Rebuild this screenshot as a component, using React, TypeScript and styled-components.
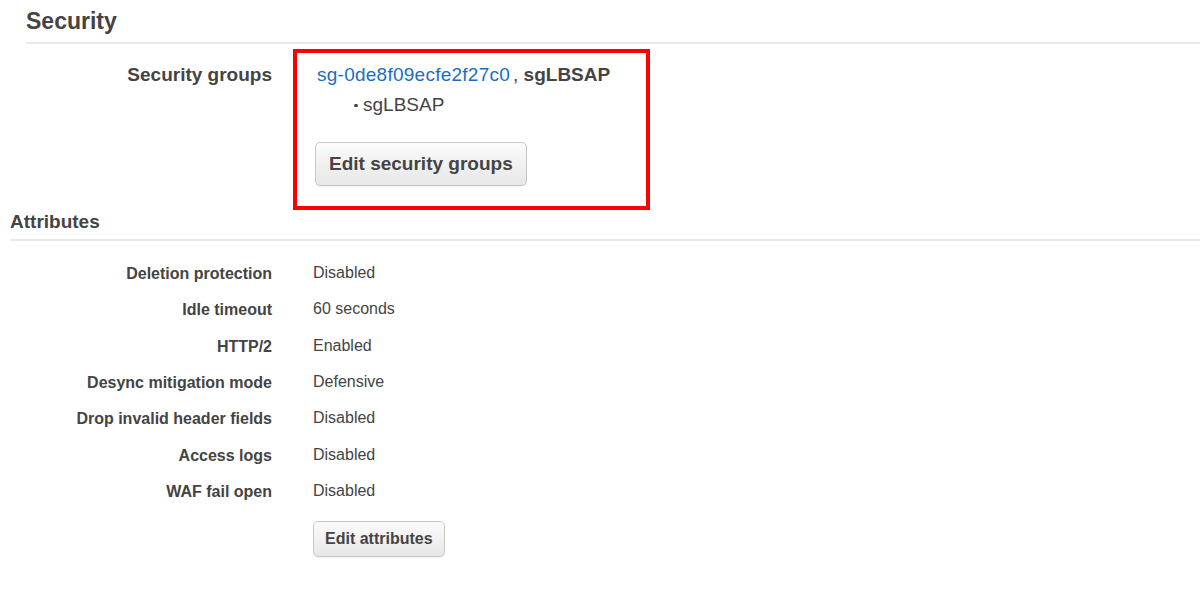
import React from "react";
import styled, { createGlobalStyle } from "styled-components";

const GlobalStyle = createGlobalStyle`
  html, body {
    margin: 0;
    padding: 0;
    background: #ffffff;
  }
  body {
    font-family: "Liberation Sans", Arial, Helvetica, sans-serif;
    color: #444444;
    overflow: hidden;
  }
`;

const Page = styled.div`
  width: 1200px;
  height: 593px;
  background: #ffffff;
`;

const SectionHeader = styled.h2<{ $indent: number; $size: number; $lh: number; $pt: number; $pb: number }>`
  margin: 0 0 0 ${(p) => p.$indent}px;
  padding: ${(p) => p.$pt}px 0 ${(p) => p.$pb}px;
  font-size: ${(p) => p.$size}px;
  line-height: ${(p) => p.$lh}px;
  font-weight: 700;
  color: #444444;
  border-bottom: 2px solid #e8e8e8;
`;

const DetailRow = styled.div<{ $gap: number; $mt?: number }>`
  display: grid;
  grid-template-columns: 272px 1fr;
  column-gap: ${(p) => p.$gap}px;
  align-items: start;
  margin-top: ${(p) => p.$mt ?? 0}px;
`;

const Label = styled.div<{ $size: number; $lh: number; $pt?: number }>`
  text-align: right;
  font-weight: 700;
  font-size: ${(p) => p.$size}px;
  line-height: ${(p) => p.$lh}px;
  padding-top: ${(p) => p.$pt ?? 0}px;
  color: #444444;
  white-space: nowrap;
`;

const Value = styled.div`
  font-size: 16px;
  line-height: 33px;
  color: #444444;
  white-space: nowrap;
`;

const HighlightBox = styled.div`
  box-sizing: border-box;
  width: 357px;
  border: 4px solid #ff0000;
  padding: 10px 20px 20px 18px;
`;

const GroupLine = styled.div`
  padding-left: 2px;
  font-size: 19px;
  line-height: 24px;
  white-space: nowrap;
`;

const GroupLink = styled.a`
  color: #1a6dbf;
  text-decoration: none;
  letter-spacing: 0.25px;
`;

const GroupName = styled.span`
  margin-left: 3px;
  font-weight: 700;
  color: #444444;
`;

const Comma = styled.span`
  font-weight: 400;
`;

const SubList = styled.ul`
  margin: 6px 0 0 39px;
  padding: 0;
  list-style: none;
`;

const SubItem = styled.li`
  font-size: 19px;
  line-height: 24px;
  color: #444444;
  display: flex;
  align-items: center;

  &::before {
    content: "";
    width: 3.5px;
    height: 3.5px;
    border-radius: 50%;
    background: #444444;
    margin-right: 5.5px;
    margin-top: 1px;
  }
`;

const Button = styled.button<{ $size: number; $height: number; $px: number; $mt: number }>`
  display: inline-flex;
  align-items: center;
  justify-content: center;
  box-sizing: border-box;
  height: ${(p) => p.$height}px;
  margin-top: ${(p) => p.$mt}px;
  padding: 0 ${(p) => p.$px}px;
  font-family: "Liberation Sans", Arial, Helvetica, sans-serif;
  font-size: ${(p) => p.$size}px;
  font-weight: 700;
  color: #444444;
  background: linear-gradient(#fbfbfb, #e7e7e7);
  border: 1px solid #c8c8c8;
  border-radius: 5px;
  box-shadow: 0 1px 1px rgba(0, 0, 0, 0.06);
  cursor: pointer;
`;

const AttrList = styled.div`
  margin-top: 15px;
`;

const attributes: [string, string][] = [
  ["Deletion protection", "Disabled"],
  ["Idle timeout", "60 seconds"],
  ["HTTP/2", "Enabled"],
  ["Desync mitigation mode", "Defensive"],
  ["Drop invalid header fields", "Disabled"],
  ["Access logs", "Disabled"],
  ["WAF fail open", "Disabled"],
];

export default function App() {
  return (
    <Page>
      <GlobalStyle />
      <SectionHeader $indent={26} $size={23} $lh={26} $pt={8} $pb={8}>
        Security
      </SectionHeader>
      <DetailRow $gap={21} $mt={5}>
        <Label $size={19} $lh={24} $pt={14}>
          Security groups
        </Label>
        <div>
          <HighlightBox>
            <GroupLine>
              <GroupLink href="#">sg-0de8f09ecfe2f27c0</GroupLink>
              <GroupName>
                <Comma>,</Comma> sgLBSAP
              </GroupName>
            </GroupLine>
            <SubList>
              <SubItem>sgLBSAP</SubItem>
            </SubList>
            <Button $size={19} $height={44} $px={13} $mt={25}>
              Edit security groups
            </Button>
          </HighlightBox>
        </div>
      </DetailRow>
      <SectionHeader $indent={10} $size={19} $lh={24} $pt={0} $pb={5}>
        Attributes
      </SectionHeader>
      <AttrList>
        {attributes.map(([k, v]) => (
          <DetailRow $gap={41} key={k}>
            <Label $size={16} $lh={36.33}>
              {k}
            </Label>
            <Value>{v}</Value>
          </DetailRow>
        ))}
        <DetailRow $gap={41} $mt={11}>
          <div />
          <div>
            <Button $size={16} $height={36} $px={11} $mt={0}>
              Edit attributes
            </Button>
          </div>
        </DetailRow>
      </AttrList>
    </Page>
  );
}
